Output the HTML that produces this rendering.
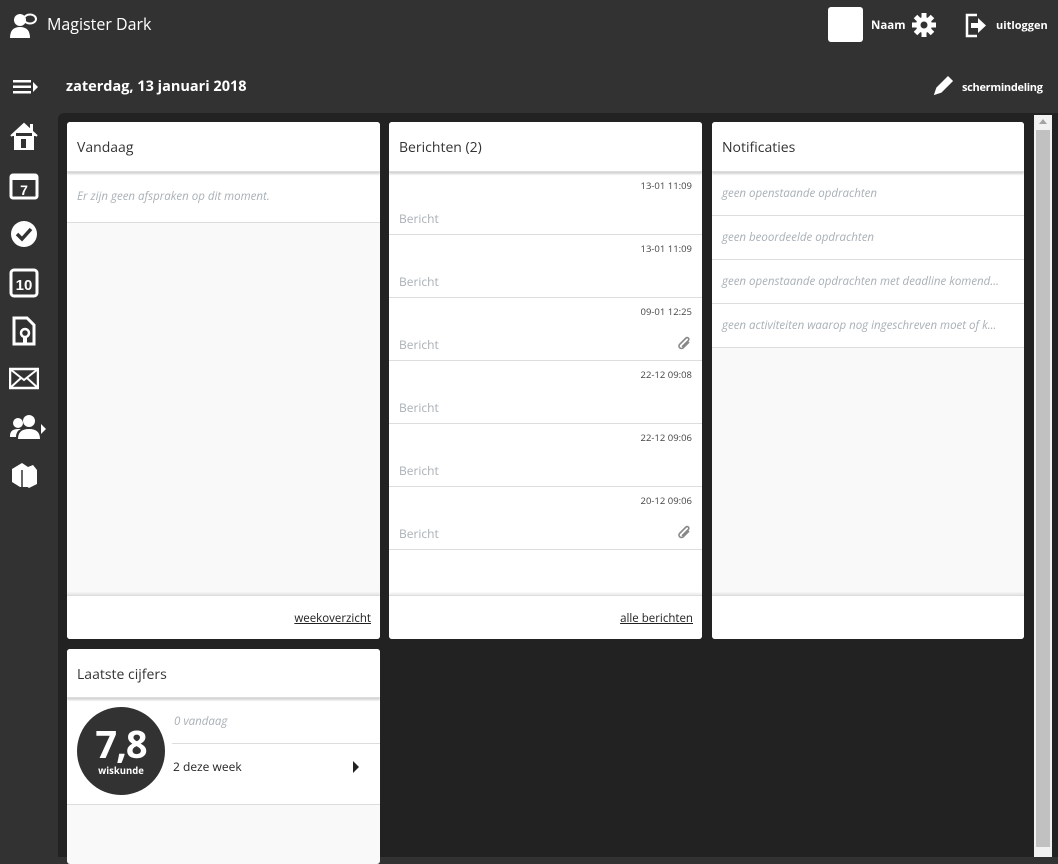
<!DOCTYPE html>
<html><head><meta charset="utf-8"><style>
*{box-sizing:border-box;margin:0;padding:0}
body{width:1058px;height:857px;overflow:hidden;background:#323232;font-family:"Open Sans","Liberation Sans",sans-serif;position:relative}
.abs{position:absolute}
.main{left:58px;top:113px;width:1000px;height:744px;background:#222;border-top-left-radius:6px}
.card{position:absolute;background:#f9f9f9;border-radius:3px;overflow:hidden}
.hd{height:50px;background:#fff;border-bottom:1px solid #ddd;box-shadow:0 2px 2px rgba(0,0,0,.18);font-size:14px;color:#333;padding:16px 0 0 10px;position:relative;z-index:1}
.ft{position:absolute;left:0;right:0;bottom:0;height:44px;background:#fff;border-top:1px solid #ddd;box-shadow:0 -2px 2px rgba(0,0,0,.08);font-size:11.5px;color:#222;text-align:right;padding:15px 9px 0 0}
.ft u{text-decoration:underline}
.it{font-style:italic;color:#a9b0b6;font-size:11.5px}
.msg{height:63px;background:#fff;border-bottom:1px solid #ddd;position:relative}
.msg .d{position:absolute;right:10px;top:7px;font-size:9.5px;color:#444}
.msg .b{position:absolute;left:10px;top:38px;font-size:12px;color:#a9b0b6}
.wt{color:#fff;font-weight:bold;font-size:11.5px}
.ic{position:absolute;left:9px;width:30px;height:30px}
</style></head><body>
<svg class="abs" style="left:10px;top:12px" width="28" height="26" viewBox="0 0 28 26"><circle cx="10" cy="8" r="6" fill="#fff"/><path d="M0 26 Q0 15 10 15 Q20 15 20 26Z" fill="#fff"/><ellipse cx="20" cy="7" rx="6" ry="4.5" fill="none" stroke="#fff" stroke-width="2"/></svg>
<div class="abs" style="left:47px;top:13px;color:#fff;font-size:16px">Magister Dark</div>
<div class="abs" style="left:828px;top:7px;width:35px;height:35px;background:#fff;border-radius:3px"></div>
<div class="abs wt" style="left:871px;top:18px">Naam</div>
<svg class="abs" style="left:911px;top:12px" width="26" height="26" viewBox="0 0 26 26"><g fill="#fff"><circle cx="13" cy="13" r="8"/><rect x="10.5" y="1" width="5" height="24"/><rect x="1" y="10.5" width="24" height="5"/><rect x="10.5" y="1" width="5" height="24" transform="rotate(45 13 13)"/><rect x="10.5" y="1" width="5" height="24" transform="rotate(-45 13 13)"/></g><circle cx="13" cy="13" r="3.5" fill="#323232"/></svg>
<svg class="abs" style="left:964px;top:13px" width="24" height="25" viewBox="0 0 24 25"><path d="M13 2H3v21h10" fill="none" stroke="#fff" stroke-width="2.5"/><path d="M7 10h7V5l8 7.5-8 7.5v-5H7z" fill="#fff"/></svg>
<div class="abs wt" style="left:996px;top:18px;font-size:11px">uitloggen</div>
<svg class="abs" style="left:13px;top:79px" width="26" height="16" viewBox="0 0 26 16"><g fill="#fff"><rect y="1" width="18" height="2.5"/><rect y="6.5" width="18" height="2.5"/><rect y="12" width="18" height="2.5"/><path d="M20 3l5 5-5 5z"/></g></svg>
<div class="abs" style="left:66px;top:77px;color:#fff;font-size:14.5px;font-weight:bold">zaterdag, 13 januari 2018</div>
<svg class="abs" style="left:931px;top:74px" width="24" height="24" viewBox="0 0 24 24"><path d="M4 20l2-6 11-11 4 4-11 11z" fill="#fff" stroke="#fff" stroke-width="1.5"/></svg>
<div class="abs wt" style="left:962px;top:80px;font-size:11px;letter-spacing:-0.3px">schermindeling</div>
<svg class="ic" style="top:121px" viewBox="0 0 30 30"><path d="M2 15L15 3l13 12M6 12v16h18V12" fill="#fff" stroke="#fff" stroke-width="2"/><rect x="12" y="18" width="5" height="9" fill="#323232"/><rect x="21" y="3" width="3" height="7" fill="#fff"/></svg>
<svg class="ic" style="top:170px" viewBox="0 0 30 30"><rect x="2" y="5" width="26" height="23" rx="2" fill="none" stroke="#fff" stroke-width="3"/><rect x="2" y="5" width="26" height="5" fill="#fff"/><text x="15" y="25" fill="#fff" font-size="14" font-weight="bold" text-anchor="middle" font-family="Liberation Sans">7</text></svg>
<svg class="ic" style="top:219px" viewBox="0 0 30 30"><circle cx="15" cy="15" r="13" fill="#fff"/><path d="M8 15l5 5 9-10" fill="none" stroke="#323232" stroke-width="3.5"/></svg>
<svg class="ic" style="top:268px" viewBox="0 0 30 30"><rect x="2" y="2" width="26" height="26" rx="3" fill="none" stroke="#fff" stroke-width="3"/><text x="15" y="22" fill="#fff" font-size="15" font-weight="bold" text-anchor="middle" font-family="Liberation Sans">10</text></svg>
<svg class="ic" style="top:316px" viewBox="0 0 30 30"><path d="M5 2h13l7 7v19H5z" fill="none" stroke="#fff" stroke-width="3"/><circle cx="16" cy="17" r="4" fill="none" stroke="#fff" stroke-width="2.5"/><rect x="14" y="21" width="4" height="6" fill="#fff"/></svg>
<svg class="ic" style="top:363px" viewBox="0 0 30 30"><rect x="1" y="6" width="28" height="19" fill="none" stroke="#fff" stroke-width="2.5"/><path d="M1 6l14 11 14-11M1 25l11-10M29 25L18 15" fill="none" stroke="#fff" stroke-width="2"/></svg>
<svg class="ic" style="top:412px;width:38px" viewBox="0 0 38 30"><g fill="#fff"><circle cx="9" cy="11" r="5"/><circle cx="20" cy="9" r="6"/><path d="M1 24q0-7 8-7h3q-5 2-5 8H1zM9 27q0-10 11-10t11 10z"/><path d="M32 12l5 5-5 5z"/></g></svg>
<svg class="ic" style="top:460px" viewBox="0 0 30 30"><path d="M3 9l10-6 6 4v20l-8 0L3 22z" fill="#fff"/><path d="M14 9l10-4 4 5v14l-8 4-6-4z" fill="#fff"/><path d="M13 10v17" stroke="#323232" stroke-width="1.5"/></svg>
<div class="abs main"></div>
<div class="abs" style="left:1034px;top:115px;width:18px;height:742px;background:#f1f1f1"></div>
<div class="abs" style="left:1036px;top:130px;width:14px;height:717px;background:#c1c1c1"></div>
<div class="abs" style="left:1039px;top:119px;width:0;height:0;border:4px solid transparent;border-bottom:5px solid #a3a3a3;border-top:0"></div>
<div class="card" style="left:67px;top:122px;width:313px;height:517px">
<div class="hd">Vandaag</div>
<div class="it" style="background:#fff;height:51px;border-bottom:1px solid #ddd;padding:17px 10px 0">Er zijn geen afspraken op dit moment.</div>
<div class="ft"><u>weekoverzicht</u></div></div>
<div class="card" style="left:389px;top:122px;width:313px;height:517px;background:#fff">
<div class="hd">Berichten (2)</div>
<div class="msg"><span class="d">13-01 11:09</span><span class="b">Bericht</span></div>
<div class="msg"><span class="d">13-01 11:09</span><span class="b">Bericht</span></div>
<div class="msg"><span class="d">09-01 12:25</span><span class="b">Bericht</span><svg class="abs" style="right:10px;top:38px" width="16" height="16" viewBox="0 0 16 16"><path d="M13 6l-6 6a2.5 2.5 0 0 1-3.5-3.5l6.5-6.5a1.7 1.7 0 0 1 2.4 2.4L6 10.8" fill="none" stroke="#888" stroke-width="1.6"/></svg></div>
<div class="msg"><span class="d">22-12 09:08</span><span class="b">Bericht</span></div>
<div class="msg"><span class="d">22-12 09:06</span><span class="b">Bericht</span></div>
<div class="msg"><span class="d">20-12 09:06</span><span class="b">Bericht</span><svg class="abs" style="right:10px;top:38px" width="16" height="16" viewBox="0 0 16 16"><path d="M13 6l-6 6a2.5 2.5 0 0 1-3.5-3.5l6.5-6.5a1.7 1.7 0 0 1 2.4 2.4L6 10.8" fill="none" stroke="#888" stroke-width="1.6"/></svg></div>
<div class="ft"><u>alle berichten</u></div></div>
<div class="card" style="left:712px;top:122px;width:312px;height:517px">
<div class="hd">Notificaties</div>
<div class="it" style="height:44px;background:#fff;border-bottom:1px solid #ddd;padding:14px 10px 0;white-space:nowrap">geen openstaande opdrachten</div>
<div class="it" style="height:44px;background:#fff;border-bottom:1px solid #ddd;padding:14px 10px 0;white-space:nowrap">geen beoordeelde opdrachten</div>
<div class="it" style="height:44px;background:#fff;border-bottom:1px solid #ddd;padding:14px 10px 0;white-space:nowrap">geen openstaande opdrachten met deadline komend...</div>
<div class="it" style="height:44px;background:#fff;border-bottom:1px solid #ddd;padding:14px 10px 0;white-space:nowrap">geen activiteiten waarop nog ingeschreven moet of k...</div>
<div class="ft"></div></div>
<div class="card" style="left:67px;top:649px;width:313px;height:215px">
<div class="hd" style="height:49px">Laatste cijfers</div>
<div style="background:#fff;height:107px;border-bottom:1px solid #ddd;position:relative">
<div class="abs" style="left:10px;top:9px;width:88px;height:88px;border-radius:50%;background:#323232;color:#fff;text-align:center">
<div style="font-size:38px;font-weight:bold;line-height:40px;margin-top:17px;letter-spacing:-1px">7,8</div>
<div style="font-size:9.5px;font-weight:bold;margin-top:0">wiskunde</div></div>
<div class="abs it" style="left:107px;top:16px">0 vandaag</div>
<div class="abs" style="left:105px;top:45px;right:0;border-top:1px solid #ddd"></div>
<div class="abs" style="left:106px;top:60px;font-size:12px;color:#222">2 deze week</div>
<div class="abs" style="left:286px;top:63px;border-left:6px solid #222;border-top:6px solid transparent;border-bottom:6px solid transparent"></div>
</div></div>
</body></html>
